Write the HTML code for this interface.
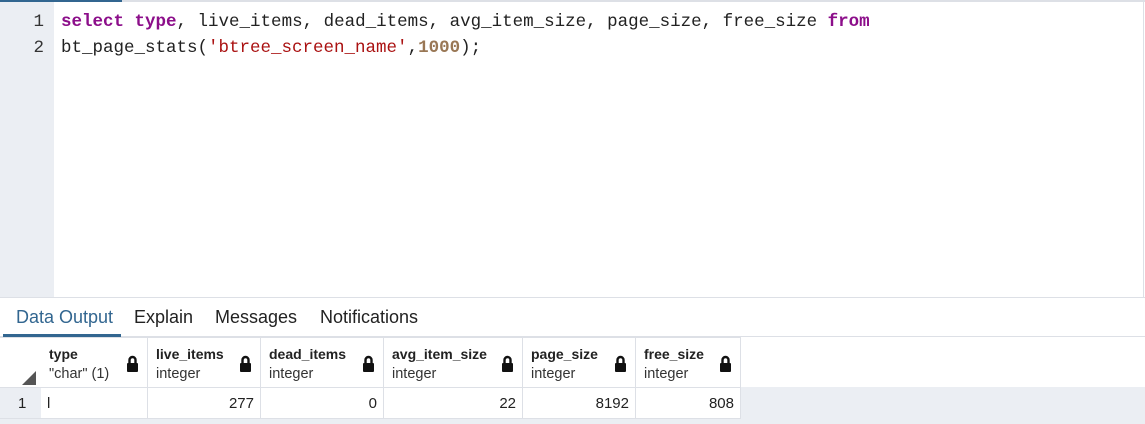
<!DOCTYPE html>
<html><head><meta charset="utf-8"><style>
*{margin:0;padding:0;box-sizing:border-box}
body{width:1145px;height:424px;overflow:hidden;background:#fff;font-family:"Liberation Sans",sans-serif;position:relative}
.topl{position:absolute;top:0;left:0;width:1145px;height:2px;background:#dde0e6}
.topb{position:absolute;top:0;left:0;width:122px;height:2px;background:#326690}
.gut{position:absolute;top:2px;left:0;width:54px;height:295px;background:#ebeef3}
.rb{position:absolute;top:0;right:1px;width:1px;height:297px;background:#dde0e6}
.code{position:absolute;left:0;top:10px;font-family:"Liberation Mono",monospace;font-size:17.5px;line-height:25px;color:#222}
.ln{position:absolute;left:0;width:44px;text-align:right;color:#333}
.tx{position:absolute;left:61px;white-space:pre}
.k{color:#8c0e8a;font-weight:bold}.s{color:#a11;}.n{color:#975;font-weight:bold}
.tabs{position:absolute;top:297px;left:0;width:1145px;height:40px;border-top:1px solid #dde0e6;border-bottom:1px solid #dde0e6;font-size:18px;color:#222}
.tab{position:absolute;top:9px}
.ul{position:absolute;left:3px;top:36px;width:118px;height:3px;background:#326690}
.bg{position:absolute;top:387px;left:0;width:1145px;height:37px;background:#ebeef3}
.c{position:absolute;border-right:1px solid #dde0e6;border-bottom:1px solid #dde0e6;background:#fff}
.h{top:337px;height:51px;border-top:1px solid #dde0e6}
.r{top:388px;height:31px;font-size:15px;color:#222;padding:7px 6px 0;text-align:right}
.nm{position:absolute;left:8px;top:8px;font-size:14px;font-weight:bold;color:#222}
.ty{position:absolute;left:8px;top:28px;font-size:14.5px;color:#333}
.lk{position:absolute;right:8px;top:17px}
</style></head><body>
<div class="topl"></div><div class="topb"></div>
<div class="gut"></div><div class="rb"></div>
<div class="code">
<div class="ln" style="top:0">1</div><div class="tx" style="top:0"><span class="k">select</span> <span class="k">type</span>, live_items, dead_items, avg_item_size, page_size, free_size <span class="k">from</span></div>
<div class="ln" style="top:26px">2</div><div class="tx" style="top:26px">bt_page_stats(<span class="s">'btree_screen_name'</span>,<span class="n">1000</span>);</div>
</div>
<div class="tabs">
<span class="tab" style="left:16px;color:#326690">Data Output</span>
<span class="tab" style="left:134px">Explain</span>
<span class="tab" style="left:215px">Messages</span>
<span class="tab" style="left:320px">Notifications</span>
<div class="ul"></div>
</div>
<div class="bg"></div>
<div class="c h" style="left:0;width:42px"><div style="position:absolute;left:22px;top:33px;width:0;height:0;border-left:14px solid transparent;border-bottom:14px solid #555"></div></div>
<div class="c h" style="left:41px;width:107px"><div class="nm">type</div><div class="ty">"char" (1)</div><svg class="lk" width="13" height="17" viewBox="0 0 13 17"><path d="M3.5 8V5a3 3 0 0 1 6 0v3" fill="none" stroke="#111" stroke-width="2.4"/><rect x="1" y="8" width="11" height="9" rx="1" fill="#111"/></svg></div>
<div class="c h" style="left:148px;width:113px"><div class="nm">live_items</div><div class="ty">integer</div><svg class="lk" width="13" height="17" viewBox="0 0 13 17"><path d="M3.5 8V5a3 3 0 0 1 6 0v3" fill="none" stroke="#111" stroke-width="2.4"/><rect x="1" y="8" width="11" height="9" rx="1" fill="#111"/></svg></div>
<div class="c h" style="left:261px;width:123px"><div class="nm">dead_items</div><div class="ty">integer</div><svg class="lk" width="13" height="17" viewBox="0 0 13 17"><path d="M3.5 8V5a3 3 0 0 1 6 0v3" fill="none" stroke="#111" stroke-width="2.4"/><rect x="1" y="8" width="11" height="9" rx="1" fill="#111"/></svg></div>
<div class="c h" style="left:384px;width:139px"><div class="nm">avg_item_size</div><div class="ty">integer</div><svg class="lk" width="13" height="17" viewBox="0 0 13 17"><path d="M3.5 8V5a3 3 0 0 1 6 0v3" fill="none" stroke="#111" stroke-width="2.4"/><rect x="1" y="8" width="11" height="9" rx="1" fill="#111"/></svg></div>
<div class="c h" style="left:523px;width:113px"><div class="nm">page_size</div><div class="ty">integer</div><svg class="lk" width="13" height="17" viewBox="0 0 13 17"><path d="M3.5 8V5a3 3 0 0 1 6 0v3" fill="none" stroke="#111" stroke-width="2.4"/><rect x="1" y="8" width="11" height="9" rx="1" fill="#111"/></svg></div>
<div class="c h" style="left:636px;width:105px"><div class="nm">free_size</div><div class="ty">integer</div><svg class="lk" width="13" height="17" viewBox="0 0 13 17"><path d="M3.5 8V5a3 3 0 0 1 6 0v3" fill="none" stroke="#111" stroke-width="2.4"/><rect x="1" y="8" width="11" height="9" rx="1" fill="#111"/></svg></div>
<div class="c r" style="left:0;width:42px;text-align:left;padding-left:18px;background:#ebeef3">1</div>
<div class="c r" style="left:41px;width:107px;text-align:left">l</div>
<div class="c r" style="left:148px;width:113px">277</div>
<div class="c r" style="left:261px;width:123px">0</div>
<div class="c r" style="left:384px;width:139px">22</div>
<div class="c r" style="left:523px;width:113px">8192</div>
<div class="c r" style="left:636px;width:105px">808</div>
</body></html>
